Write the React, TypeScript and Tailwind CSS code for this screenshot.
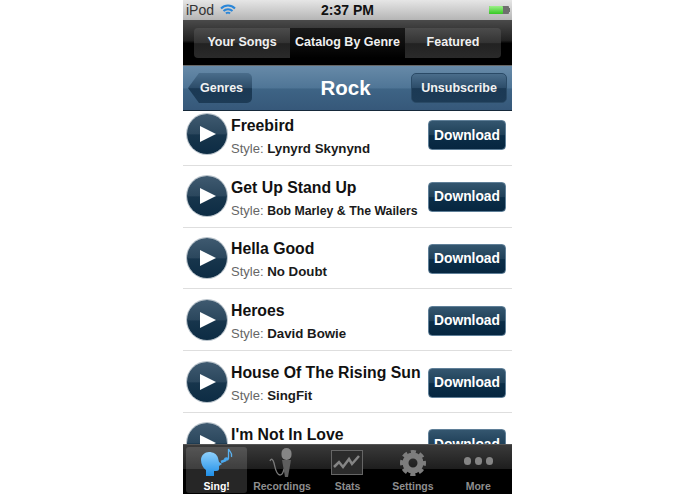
const songs = [
  { title: 'Freebird', artist: 'Lynyrd Skynynd' },
  { title: 'Get Up Stand Up', artist: 'Bob Marley & The Wailers', small: true },
  { title: 'Hella Good', artist: 'No Doubt' },
  { title: 'Heroes', artist: 'David Bowie' },
  { title: 'House Of The Rising Sun', artist: 'SingFit' },
  { title: "I'm Not In Love", artist: '' },
];

function SingIcon() {
  return (
    <svg width="34" height="30" viewBox="0 0 34 30">
      <defs>
        <linearGradient id="sing" x1="0" y1="0" x2="0" y2="1">
          <stop offset="0" stopColor="#8fd0fb" />
          <stop offset="1" stopColor="#1f8fe8" />
        </linearGradient>
      </defs>
      <path d="M1 12c0-5 4-8 8-8s8 2 9 6l1 4 3 2-3 2v3c0 2-2 2-5 2v5H6v-6C3 20 1 16 1 12z" fill="url(#sing)" />
      <path d="M21 14l5-2" stroke="#4aa8ee" strokeWidth="2.500" />
      <path d="M28.500 11V1c1 3 4 3 3 8" stroke="#5bb2f0" strokeWidth="1.300" fill="none" />
      <ellipse cx="26.500" cy="11" rx="2.500" ry="1.800" fill="#4aa8ee" />
    </svg>
  );
}

function MicIcon() {
  return (
    <svg width="26" height="32" viewBox="0 0 26 32" fill="none">
      <path d="M1 14c1-3 3-2 4 2s2 12 6 12c3 0 3-3 4-6" stroke="#7a7a7a" strokeWidth="1.300" />
      <path d="M13 13h9l-3 17h-3z" fill="#5e5e5e" />
      <rect x="12.500" y="1" width="10" height="12" rx="5" fill="#858585" />
    </svg>
  );
}

function StatsIcon() {
  return (
    <svg width="32" height="25" viewBox="0 0 32 25" fill="none">
      <rect x="0.500" y="0.500" width="31" height="24" fill="#2b2b2b" stroke="#666" />
      <path d="M3 17l5-5 4 5 6-8 3 5 7-8" stroke="#858585" strokeWidth="2.500" />
    </svg>
  );
}

function GearIcon() {
  return (
    <svg width="26" height="26" viewBox="0 0 26 26" fill="none">
      <circle cx="13" cy="13" r="7.500" stroke="#7d7d7d" strokeWidth="6" />
      <circle cx="13" cy="13" r="11" stroke="#7d7d7d" strokeWidth="4" strokeDasharray="5 3.640" strokeDashoffset="2.500" />
    </svg>
  );
}

function DotsIcon() {
  return (
    <div className="flex h-[30px] items-center gap-[3.5px] pb-[3px]">
      <span className="h-[7.5px] w-[7.5px] rounded-full bg-[#858585]" />
      <span className="h-[7.5px] w-[7.5px] rounded-full bg-[#858585]" />
      <span className="h-[7.5px] w-[7.5px] rounded-full bg-[#858585]" />
    </div>
  );
}

function SongRow({ title, artist, small }: { title: string; artist: string; small?: boolean }) {
  return (
    <div className="flex h-[61.8px] shrink-0 items-center border-b border-[#dedede] pl-[4px] pr-[6px]">
      <div className="flex h-[40px] w-[40px] shrink-0 items-center justify-center rounded-full bg-[linear-gradient(#3f5a70_0%,#2b475d_50%,#17354c_52%,#0d2c44_100%)] shadow-[0_0_0_1px_#b9c3cb]">
        <svg width="16" height="16" viewBox="0 0 16 16" className="ml-[2px]">
          <polygon points="0,0 16,8 0,16" fill="white" />
        </svg>
      </div>
      <div className="ml-[4px] min-w-0 flex-1 pt-[6px]">
        <div className="whitespace-nowrap text-[15.8px] font-bold leading-[20px] text-[#111]">{title}</div>
        <div className="mt-[3px] whitespace-nowrap text-[13px] leading-[20px] text-[#666]">
          Style:{' '}
          <span className={`font-bold text-[#1a1a1a] ${small ? 'text-[12.3px]' : 'text-[13.3px]'}`}>{artist}</span>
        </div>
      </div>
      <div className="mt-[2px] flex h-[30px] w-[78px] shrink-0 items-center justify-center rounded-[4px] border border-[#5f7f98] bg-[linear-gradient(#34566f_0%,#1f4058_50%,#0b2e48_52%,#062640_100%)] pt-[1px] text-[13.8px] font-bold text-white">
        Download
      </div>
    </div>
  );
}

function TabItem({ label, active, children }: { label: string; active?: boolean; children: React.ReactNode }) {
  return (
    <div
      className={`flex h-[46px] w-[61px] flex-col items-center justify-between rounded-[3px] ${
        active ? 'bg-white/15' : ''
      }`}
    >
      <div className="flex h-[31px] items-center justify-center">{children}</div>
      <div className={`whitespace-nowrap text-[10.5px] font-bold leading-[14px] ${active ? 'text-white' : 'text-[#8e8e8e]'}`}>
        {label}
      </div>
    </div>
  );
}

export default function App() {
  return (
    <div className="h-[494px] w-[695px] overflow-hidden bg-white font-['Liberation_Sans',Arial,sans-serif]">
      <div className="ml-[183px] flex h-[494px] w-[329px] flex-col">
        {/* status bar */}
        <div className="relative flex h-[20px] shrink-0 items-center justify-between bg-[linear-gradient(#e6e6e6,#b5b5b5)] pl-[3px] pr-[2px] text-[#333]">
          <div className="flex items-center gap-[6px] text-[14px] leading-none">
            iPod
            <svg width="16" height="12" viewBox="0 0 16 12" fill="none" stroke="#2a86d8" strokeWidth="2">
              <path d="M1 4.500c4-4 10-4 14 0" />
              <path d="M3.500 7c2.500-2.500 6.500-2.500 9 0" />
              <path d="M6 9.500c1-1 3-1 4 0" />
            </svg>
          </div>
          <div className="absolute left-1/2 -translate-x-1/2 whitespace-nowrap text-[14px] font-bold leading-none text-[#111]">
            2:37 PM
          </div>
          <div className="flex items-center">
            <div className="flex h-[8px] w-[20px] rounded-[1px] bg-[#6e6e6e]">
              <div className="h-full w-[14px] rounded-[1px] bg-[linear-gradient(#9df08a,#35c822)]" />
            </div>
            <div className="h-[4px] w-[1px] bg-[#6e6e6e]" />
          </div>
        </div>

        {/* segmented control */}
        <div className="flex h-[46px] shrink-0 items-center justify-center border-b border-[#666] bg-[linear-gradient(#4a4a4a_0%,#222_45%,#000_52%,#000_100%)]">
          <div className="flex h-[30px] w-[307px] overflow-hidden rounded-[4px] bg-[linear-gradient(#4c4c4c,#333_50%,#222_52%,#2a2a2a)] text-[12.5px] font-bold text-[#f0f0f0]">
            <div className="flex w-[96px] items-center justify-center">Your Songs</div>
            <div className="flex w-[115px] items-center justify-center whitespace-nowrap bg-[linear-gradient(#1a1a1a,#000)]">
              Catalog By Genre
            </div>
            <div className="flex flex-1 items-center justify-center">Featured</div>
          </div>
        </div>

        {/* nav bar */}
        <div className="relative z-10 flex h-[45px] shrink-0 items-center justify-between border-b border-[#16293a] bg-[linear-gradient(#678aa8_0%,#4f7596_50%,#3e6485_52%,#36587a_100%)] pl-[5px] pr-[5px]">
          <div className="flex h-[30px] w-[64px] items-center justify-center rounded-r-[5px] bg-[linear-gradient(#4a6d8b,#2c4c69_50%,#1b3954_52%,#1d3b56)] pl-[3px] text-[12.5px] font-bold text-[#f2f2f2] [clip-path:polygon(11px_0,100%_0,100%_100%,11px_100%,0_50%)]">
            Genres
          </div>
          <div className="ml-[28px] text-[20.5px] font-bold text-white">Rock</div>
          <div className="flex h-[30px] w-[96px] items-center justify-center rounded-[5px] border border-[#2a4a66] bg-[linear-gradient(#4a6d8b,#2c4c69_50%,#1b3954_52%,#1d3b56)] text-[12.5px] font-bold text-[#f2f2f2]">
            Unsubscribe
          </div>
        </div>

        {/* song list */}
        <div className="min-h-0 flex-1 overflow-hidden">
          <div className="-mt-[7px]">
            {songs.map((s) => (
              <SongRow key={s.title} title={s.title} artist={s.artist} small={s.small} />
            ))}
          </div>
        </div>

        {/* tab bar */}
        <div className="flex h-[50px] shrink-0 items-start justify-around border-t border-[#555] bg-[linear-gradient(#3a3a3a_0%,#1e1e1e_48%,#000_50%,#000_100%)] px-[1px] pt-[2px]">
          <TabItem label="Sing!" active>
            <SingIcon />
          </TabItem>
          <TabItem label="Recordings">
            <MicIcon />
          </TabItem>
          <TabItem label="Stats">
            <StatsIcon />
          </TabItem>
          <TabItem label="Settings">
            <GearIcon />
          </TabItem>
          <TabItem label="More">
            <DotsIcon />
          </TabItem>
        </div>
      </div>
    </div>
  );
}
